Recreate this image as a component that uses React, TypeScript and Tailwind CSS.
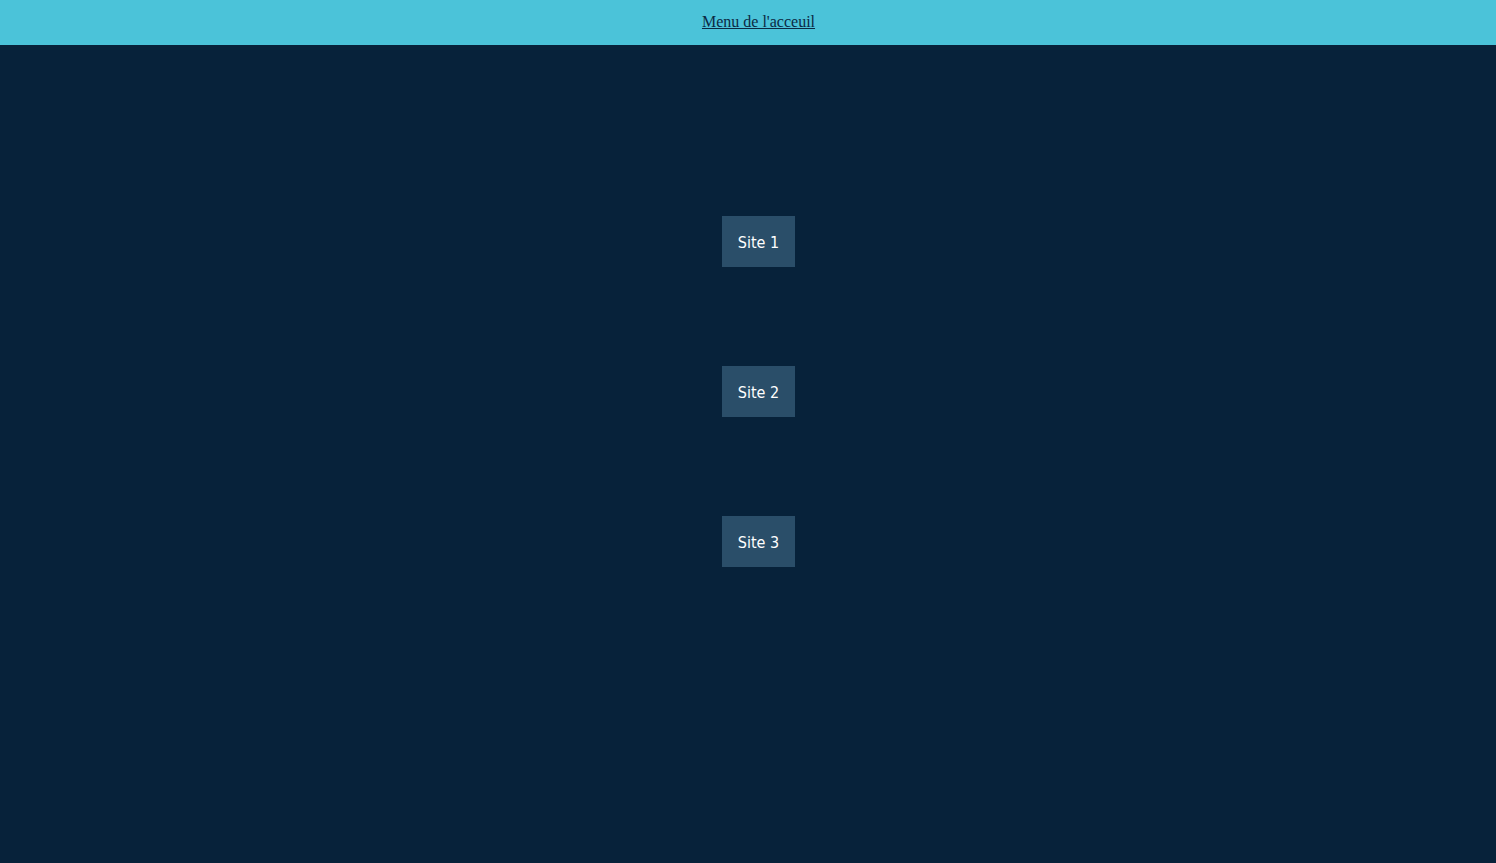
export default function App() {
  const sites = ["Site 1", "Site 2", "Site 3"];

  return (
    <div className="min-h-screen bg-[#07223a] pl-[21px]">
      <header className="h-[45px] bg-[#4bc3d9] flex items-center justify-center -ml-[21px] pl-[21px]">
        <a
          href="#"
          className="text-[#0b2a44] underline text-[16px] font-['Liberation_Serif',serif] mt-[-2px]"
        >
          Menu de l'acceuil
        </a>
      </header>

      <main className="flex flex-col items-center pt-[171px] gap-[99px]">
        {sites.map((s) => (
          <button
            key={s}
            className="h-[51px] w-[73px] pt-[2px] bg-[#2a4e69] text-white text-[16px] font-['DejaVu_Sans_Condensed','DejaVu_Sans',sans-serif] [font-stretch:condensed]"
          >
            {s}
          </button>
        ))}
      </main>
    </div>
  );
}
